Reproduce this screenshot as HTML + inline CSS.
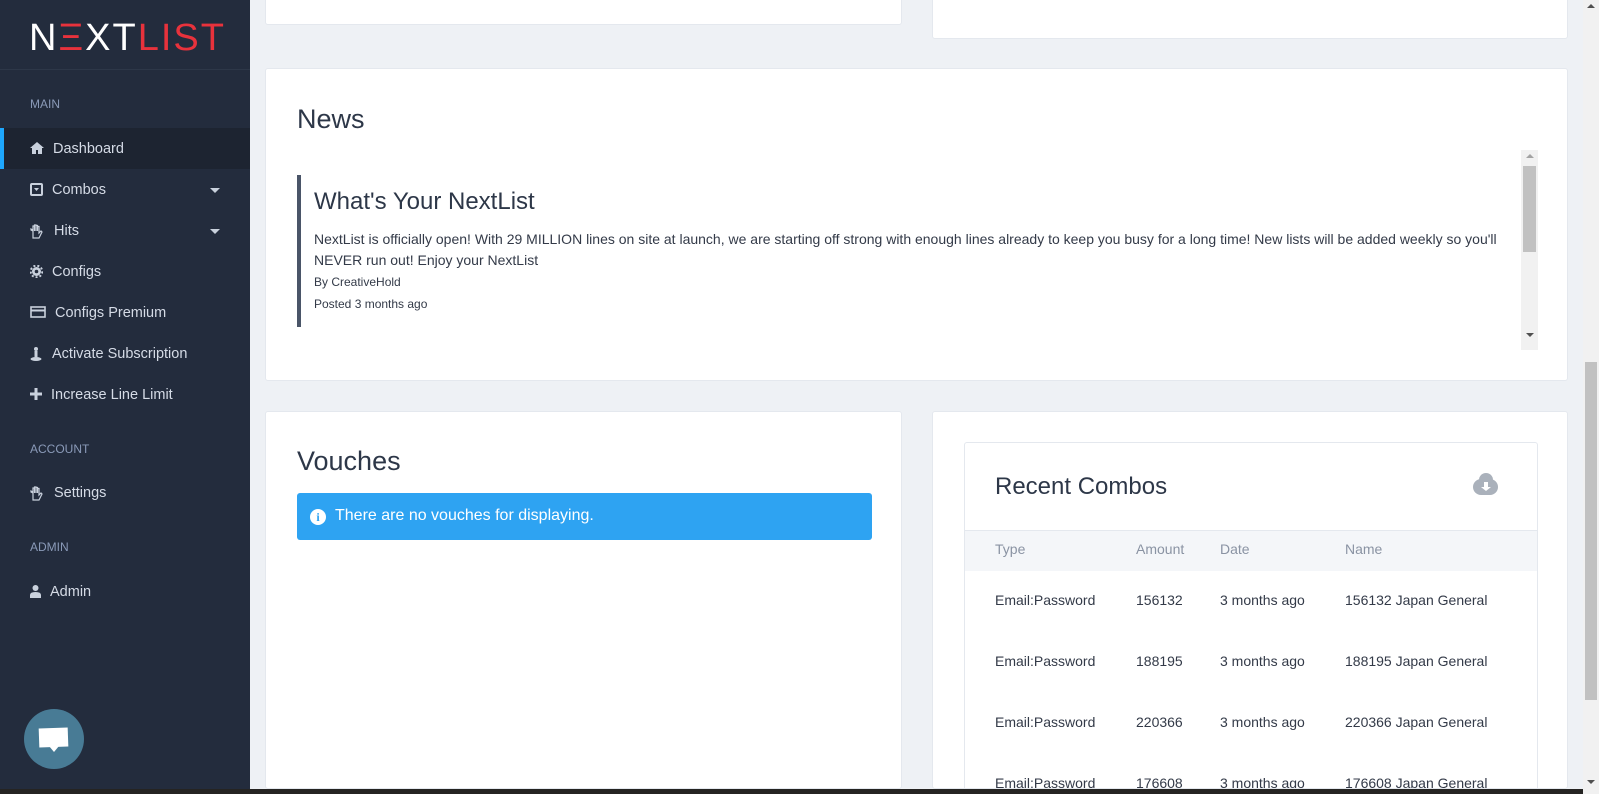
<!DOCTYPE html>
<html><head><meta charset="utf-8"><style>
*{margin:0;padding:0;box-sizing:border-box}
html,body{width:1599px;height:794px;overflow:hidden}
body{background:#eef1f5;font-family:"Liberation Sans",Arial,sans-serif;color:#333a48}
#wrap{position:relative;width:1599px;height:794px;overflow:hidden}
.a{position:absolute}
#sb{left:0;top:0;width:250px;height:789px;background:#232c3d}
.logo{left:29px;top:17px;font-size:38px;letter-spacing:2px;color:#fff;font-weight:400}
.sec{left:30px;font-size:12px;color:#8a9ab8;transform:translateY(-50%)}
.it{left:0;width:250px;height:41px;color:#d5dbe6;font-size:14.5px}
.it span{position:absolute;top:50%;transform:translateY(-50%)}
.it svg{position:absolute;left:30px;top:14px}
.caret{position:absolute;right:30px;top:19px;border:5px solid transparent;border-top:5px solid #c9d1dd;border-bottom:0}
.card{background:#fff;border:1px solid #e4e8ee;border-radius:3px;overflow:hidden}
.tx{font-size:14px;color:#333a48}
.th{font-size:14px;color:#8a93a3}
.td{font-size:14px;color:#333a48}
</style></head><body><div id="wrap">

<div class="a card" style="left:265px;top:-5px;width:637px;height:30px"></div>
<div class="a card" style="left:932px;top:-5px;width:636px;height:44px"></div>

<div class="a card" style="left:265px;top:68px;width:1303px;height:313px">
 <div class="a" style="left:31px;top:35px;font-size:27px;color:#2d3748">News</div>
 <div class="a" style="left:31px;top:106px;width:4px;height:152px;background:#4a5568"></div>
 <div class="a" style="left:48px;top:119px;font-size:24px;color:#2d3748">What's Your NextList</div>
 <div class="a tx" style="left:48px;top:160px;width:1200px;line-height:21px">NextList is officially open! With 29 MILLION lines on site at launch, we are starting off strong with enough lines already to keep you busy for a long time! New lists will be added weekly so you'll NEVER run out! Enjoy your NextList</div>
 <div class="a" style="left:48px;top:206px;font-size:12px">By CreativeHold</div>
 <div class="a" style="left:48px;top:228px;font-size:12px">Posted 3 months ago</div>
 <div class="a" style="left:1255px;top:81px;width:17px;height:200px;background:#f1f1f1"></div>
 <div class="a" style="left:1257px;top:97px;width:13px;height:86px;background:#c1c1c1"></div>
 <div class="a" style="left:1260px;top:85px;border:4px solid transparent;border-bottom:4px solid #a3a3a3;border-top:0"></div>
 <div class="a" style="left:1260px;top:264px;border:4px solid transparent;border-top:4px solid #505050;border-bottom:0"></div>
</div>

<div class="a card" style="left:265px;top:411px;width:637px;height:378px">
 <div class="a" style="left:31px;top:34px;font-size:27px;color:#2d3748">Vouches</div>
 <div class="a" style="left:31px;top:81px;width:575px;height:47px;background:#2ea3f2;border-radius:3px;color:#fff;font-size:16px">
  <div class="a" style="left:13px;top:16px;width:16px;height:16px;border-radius:50%;background:#fff;color:#2ea3f2;font-size:12px;font-weight:bold;text-align:center;line-height:16px;font-family:'Liberation Serif',serif">i</div>
  <div class="a" style="left:38px;top:14px">There are no vouches for displaying.</div>
 </div>
</div>

<div class="a card" style="left:932px;top:411px;width:636px;height:378px">
 <div class="a" style="left:31px;top:30px;width:574px;height:360px;border:1px solid #e4e8ee;border-radius:3px">
  <div class="a" style="left:30px;top:30px;font-size:24px;color:#2d3748">Recent Combos</div>
  <div class="a" style="left:508px;top:36px;width:25px;height:16px;background:#aab1bb;border-radius:8px"></div>
  <div class="a" style="left:514px;top:30px;width:14px;height:14px;background:#aab1bb;border-radius:50%"></div>
  <div class="a" style="left:519px;top:39px;width:4px;height:5px;background:#fff"></div>
  <div class="a" style="left:516px;top:44px;border:5px solid transparent;border-top:4px solid #fff;border-bottom:0"></div>
  <div class="a" style="left:0;top:87px;width:572px;height:41px;background:#f4f6f9;border-top:1px solid #e4e8ee"></div>
  <div class="a th" style="left:30px;top:98px">Type</div>
  <div class="a th" style="left:171px;top:98px">Amount</div>
  <div class="a th" style="left:255px;top:98px">Date</div>
  <div class="a th" style="left:380px;top:98px">Name</div>
  <div class="a td" style="left:30px;top:149px">Email:Password</div><div class="a td" style="left:171px;top:149px">156132</div><div class="a td" style="left:255px;top:149px">3 months ago</div><div class="a td" style="left:380px;top:149px">156132 Japan General</div>
  <div class="a td" style="left:30px;top:210px">Email:Password</div><div class="a td" style="left:171px;top:210px">188195</div><div class="a td" style="left:255px;top:210px">3 months ago</div><div class="a td" style="left:380px;top:210px">188195 Japan General</div>
  <div class="a td" style="left:30px;top:271px">Email:Password</div><div class="a td" style="left:171px;top:271px">220366</div><div class="a td" style="left:255px;top:271px">3 months ago</div><div class="a td" style="left:380px;top:271px">220366 Japan General</div>
  <div class="a td" style="left:30px;top:332px">Email:Password</div><div class="a td" style="left:171px;top:332px">176608</div><div class="a td" style="left:255px;top:332px">3 months ago</div><div class="a td" style="left:380px;top:332px">176608 Japan General</div>
 </div>
</div>

<div id="sb" class="a">
 <div class="a" style="left:0;top:69px;width:250px;height:1px;background:#2d3748"></div>
 <div class="a logo"><span style="color:#fff">N</span><span style="color:#e8323c">Ξ</span><span style="color:#fff">XT</span><span style="color:#e8323c">LIST</span></div>
 <div class="a sec" style="top:104px">MAIN</div>
 <div class="a it" style="top:128px;background:#1d2431"><div class="a" style="left:0;top:0;width:4px;height:41px;background:#1ea7fd"></div><svg width="14" height="12" viewBox="0 0 14 12"><path d="M7 0L0 6h2v6h4V8h2v4h4V6h2z" fill="#c9d1dd"/></svg><span style="left:53px">Dashboard</span></div>
 <div class="a it" style="top:169px"><svg width="13" height="13" viewBox="0 0 13 13"><rect x="1" y="1" width="11" height="11" rx="1" fill="none" stroke="#c9d1dd" stroke-width="2"/><path d="M4 5h5L6.5 8z" fill="#c9d1dd"/></svg><span style="left:52px">Combos</span><i class="caret"></i></div>
 <div class="a it" style="top:210px"><svg width="14" height="15" viewBox="0 0 14 15"><path d="M3 14V7L1 6V5l2 1V2h1.5v5V1h1.5v6V1.5h1.5V7V2.5H9V9l2-2 1 1-3 6z" fill="none" stroke="#c9d1dd" stroke-width="1.2"/></svg><span style="left:54px">Hits</span><i class="caret"></i></div>
 <div class="a it" style="top:251px"><svg width="13" height="13" viewBox="0 0 13 13"><circle cx="6.5" cy="6.5" r="4.5" fill="#c9d1dd"/><circle cx="6.5" cy="6.5" r="5.8" fill="none" stroke="#c9d1dd" stroke-width="2" stroke-dasharray="2 2"/><circle cx="6.5" cy="6.5" r="1.8" fill="#232c3d"/></svg><span style="left:52px">Configs</span></div>
 <div class="a it" style="top:292px"><svg width="16" height="12" viewBox="0 0 16 12"><rect x="1" y="1" width="14" height="10" fill="none" stroke="#c9d1dd" stroke-width="1.6"/><rect x="1" y="3.5" width="14" height="2" fill="#c9d1dd"/></svg><span style="left:55px">Configs Premium</span></div>
 <div class="a it" style="top:333px"><svg width="12" height="14" viewBox="0 0 12 14"><circle cx="6" cy="2" r="2" fill="#c9d1dd"/><rect x="4.5" y="4" width="3" height="6" fill="#c9d1dd"/><ellipse cx="6" cy="12" rx="5.5" ry="2" fill="#c9d1dd"/></svg><span style="left:52px">Activate Subscription</span></div>
 <div class="a it" style="top:374px"><svg width="12" height="12" viewBox="0 0 12 12"><path d="M4.5 0h3v4.5H12v3H7.5V12h-3V7.5H0v-3h4.5z" fill="#c9d1dd"/></svg><span style="left:51px">Increase Line Limit</span></div>
 <div class="a sec" style="top:449px">ACCOUNT</div>
 <div class="a it" style="top:472px"><svg width="14" height="15" viewBox="0 0 14 15"><path d="M3 14V7L1 6V5l2 1V2h1.5v5V1h1.5v6V1.5h1.5V7V2.5H9V9l2-2 1 1-3 6z" fill="none" stroke="#c9d1dd" stroke-width="1.2"/></svg><span style="left:54px">Settings</span></div>
 <div class="a sec" style="top:547px">ADMIN</div>
 <div class="a it" style="top:571px"><svg width="11" height="13" viewBox="0 0 11 13"><circle cx="5.5" cy="3" r="3" fill="#c9d1dd"/><path d="M0 13V10q0-3 5.5-3T11 10v3z" fill="#c9d1dd"/></svg><span style="left:50px">Admin</span></div>
 <div class="a" style="left:24px;top:709px;width:60px;height:60px;border-radius:50%;background:#487b95"></div>
 <div class="a" style="left:39px;top:728px;width:29px;height:19px;background:#fff;transform:rotate(-2deg)"></div>
 <div class="a" style="left:49px;top:746px;border:5px solid transparent;border-top:6px solid #fff;border-bottom:0"></div>
</div>
<div class="a" style="left:0;top:789px;width:1599px;height:5px;background:#252422"></div>

<div class="a" style="left:1583px;top:0;width:16px;height:794px;background:#f1f1f1"></div>
<div class="a" style="left:1585px;top:362px;width:12px;height:338px;background:#c1c1c1"></div>
<div class="a" style="left:1587px;top:4px;border:4px solid transparent;border-bottom:4px solid #505050;border-top:0"></div>
<div class="a" style="left:1587px;top:780px;border:4px solid transparent;border-top:4px solid #505050;border-bottom:0"></div>
</div></body></html>
